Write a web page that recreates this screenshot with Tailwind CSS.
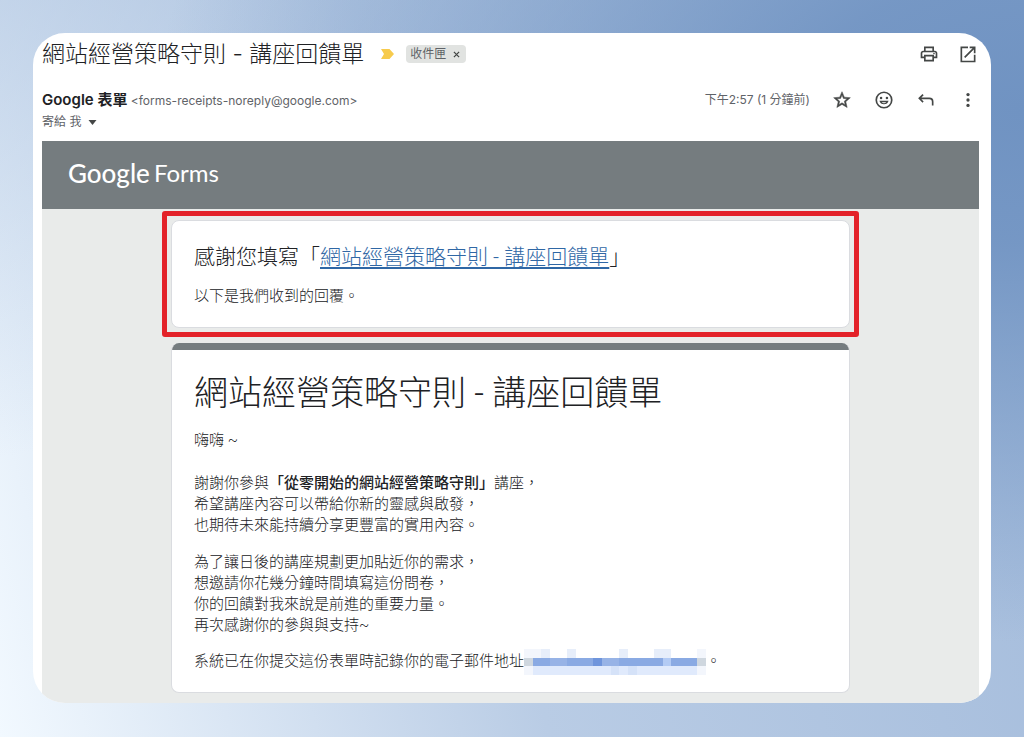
<!DOCTYPE html>
<html lang="zh-Hant">
<head>
  <meta charset="UTF-8">
  <meta name="viewport" content="width=device-width, initial-scale=1.0">
  <title>網站經營策略守則 - 講座回饋單</title>
  <script src="https://cdn.jsdelivr.net/npm/@tailwindcss/browser@4"></script>
</head>
<body class="min-h-screen p-[33px] bg-[radial-gradient(ellipse_at_100%_15%,#7093c2_0%,#7093c2e6_15%,#7093c200_60%),linear-gradient(170deg,#a9c0de80_0%,#a9c0de00_50%),linear-gradient(75deg,#f2f9ff_0%,#b9cce5_45%,#a3bbdb_100%)] font-['Inter','Noto_Sans_CJK_TC',sans-serif] text-[#202124]">

<!-- Mail window -->
<main class="bg-white rounded-[32px] overflow-hidden pl-[9px] pr-3">

  <!-- Subject -->
  <header class="flex items-center h-[42px] pr-px">
    <h1 class="text-[23px] font-light leading-8">網站經營策略守則 - 講座回饋單</h1>
    <svg class="w-[14px] h-3 ml-4" viewBox="0 0 14 12" fill="#f7cb4d"><path d="M1 1h8.500L14 6 9.500 11H1l3-5z"/></svg>
    <span class="ml-3 h-[18px] px-1 flex items-center gap-1 rounded bg-[#e1e3e1] text-xs text-[#5f6368]">收件匣
      <button aria-label="移除標籤" class="w-3 h-4 flex items-center justify-center">
        <svg class="w-[7px] h-[7px]" viewBox="0 0 8 8" stroke="#444746" stroke-width="1.400"><path d="M1 1l6 6M7 1L1 7"/></svg>
      </button>
    </span>
    <div class="ml-auto flex gap-[19px] text-[#444746]">
      <button aria-label="列印"><svg class="w-5 h-5" viewBox="0 0 24 24" fill="currentColor"><path d="M19 8h-1V3H6v5H5c-1.660 0-3 1.340-3 3v6h4v4h12v-4h4v-6c0-1.660-1.340-3-3-3zM8 5h8v3H8V5zm8 14H8v-4h8v4zm2-4v-2H6v2H4v-4c0-.55.45-1 1-1h14c.55 0 1 .45 1 1v4h-2z"/><circle cx="18" cy="11.500" r="1"/></svg></button>
      <button aria-label="在新視窗中開啟"><svg class="w-5 h-5" viewBox="0 0 24 24" fill="none" stroke="currentColor" stroke-width="2"><path d="M12 4H4v17h16v-8M14 4h6v7M20 4L8 16"/></svg></button>
    </div>
  </header>

  <!-- Sender -->
  <section class="mt-[15px] pb-[9px]">
    <div class="flex items-center h-5 pr-px">
      <p class="text-xs text-[#5f6368]"><span class="text-[15px] leading-5 font-semibold text-[#202124]">Google 表單</span> &lt;forms-receipts-noreply@google.com&gt;</p>
      <p class="ml-auto text-xs text-[#5f6368]">下午2:57 (1 分鐘前)</p>
      <div class="ml-[22px] flex gap-[22px] text-[#444746]">
        <button aria-label="加上星號"><svg class="w-5 h-5" viewBox="0 0 24 24" fill="currentColor" stroke="currentColor" stroke-width=".6"><path d="M22 9.240l-7.190-.62L12 2 9.190 8.630 2 9.240l5.460 4.730L5.820 21 12 17.270 18.180 21l-1.630-7.030L22 9.240zM12 15.400l-3.760 2.270 1-4.280-3.320-2.880 4.380-.38L12 6.100l1.710 4.040 4.380.38-3.320 2.880 1 4.280L12 15.400z"/></svg></button>
        <button aria-label="新增表情符號"><svg class="w-5 h-5" viewBox="0 0 24 24" fill="currentColor"><circle cx="12" cy="12" r="9.300" fill="none" stroke="currentColor" stroke-width="2"/><circle cx="8.500" cy="9.500" r="1.500"/><circle cx="15.500" cy="9.500" r="1.500"/><path d="M6.500 13h11a5.700 5.700 0 0 1-11 0zm2.700 1.700a3.700 3.700 0 0 0 5.600 0z" fill-rule="evenodd"/></svg></button>
        <button aria-label="回覆"><svg class="w-5 h-5" viewBox="0 0 24 24" fill="none" stroke="currentColor" stroke-width="2"><path d="M8.500 5.500L4 10l4.500 4.500M4 10h12c2.500 0 4 1.500 4 4v4.500"/></svg></button>
        <button aria-label="更多"><svg class="w-5 h-5" viewBox="0 0 24 24" fill="currentColor"><circle cx="12" cy="5.500" r="2"/><circle cx="12" cy="12" r="2"/><circle cx="12" cy="18.500" r="2"/></svg></button>
      </div>
    </div>
    <button class="mt-[2px] flex items-center gap-[7px] h-5 text-xs text-[#5f6368]">寄給 我
      <svg class="w-[9px] h-[5px]" viewBox="0 0 8 5" fill="#444746"><path d="M0 0h8L4 5z"/></svg>
    </button>
  </section>

  <!-- Mail body -->
  <article class="bg-[#e9ebea] pb-[10px]">
    <div class="h-[68px] px-[26px] pb-1 flex items-center gap-1 bg-[#757c7f] text-white font-['Lato',sans-serif]">
      <span class="text-[26px] leading-8 font-medium">Google</span>
      <span class="text-2xl leading-8">Forms</span>
    </div>

    <div class="max-w-[697px] mx-auto pt-[2px]">
      <!-- Highlighted card -->
      <div class="border-[5px] border-[#e32229] rounded-[3px] px-1 py-1">
        <section class="bg-white border border-[#dadce0] rounded-lg px-[22px] pt-[22px] pb-[21px]">
          <h2 class="font-['Roboto','Noto_Sans_CJK_TC',sans-serif] text-[21px] leading-7 font-light">感謝您填寫「<a href="#" class="text-[#2f67a5] underline underline-offset-3 decoration-2">網站經營策略守則 - 講座回饋單</a>」</h2>
          <p class="mt-[14px] text-[15px] leading-[21px] font-light">以下是我們收到的回覆。</p>
        </section>
      </div>

      <!-- Form card -->
      <section class="mt-[6px] mx-[9px] bg-white rounded-lg overflow-hidden border border-t-0 border-[#dadce0] font-['Roboto','Noto_Sans_CJK_TC',sans-serif] text-[15px] leading-[21px] font-light">
        <div class="h-[7px] bg-[#757c7f]"></div>
        <div class="px-[22px] pt-[21px] pb-5">
          <h2 class="text-[34px] leading-[44px]">網站經營策略守則 - 講座回饋單</h2>
          <p class="mt-[15px]">嗨嗨 ~</p>
          <p class="mt-[22px]">謝謝你參與<b class="font-medium">「從零開始的網站經營策略守則」</b>講座，<br>希望講座內容可以帶給你新的靈感與啟發，<br>也期待未來能持續分享更豐富的實用內容。</p>
          <p class="mt-4">為了讓日後的講座規劃更加貼近你的需求，<br>想邀請你花幾分鐘時間填寫這份問卷，<br>你的回饋對我來說是前進的重要力量。<br>再次感謝你的參與與支持~</p>
          <p class="mt-[15px] h-[21px] flex items-center">系統已在你提交這份表單時記錄你的電子郵件地址
            <!-- Redacted address -->
            <svg class="w-[182px] h-[26px] shrink-0" viewBox="0 0 21 3" preserveAspectRatio="none" shape-rendering="crispEdges">
              <path fill="#f3f6fc" d="M0 0h2v1H0zM20 0h1v1h-1zM0 2h1v1H0zM20 2h1v1h-1z"/>
              <path fill="#e7eefa" d="M2 0h1v1H2zM5 0h1v1H5zM11 0h1v1h-1zM15 0h2v1h-2z"/>
              <path fill="#cfd7df" d="M0 1h1v1H0zM20 1h1v1h-1z"/>
              <path fill="#8aaae3" d="M1 1h19v1H1z"/>
              <path fill="#97b3e6" d="M3 1h2v1H3zM9 1h2v1H9z"/>
              <path fill="#6f95dc" d="M8 1h1v1H8z"/>
              <path fill="#b3cbf4" d="M16 1h1v1h-1z"/>
              <path fill="#e0eafc" d="M1 2h19v1H1z"/>
              <path fill="#d5e2f8" d="M10 2h1v1h-1zM12 2h1v1h-1z"/>
            </svg>。</p>
        </div>
      </section>
    </div>
  </article>
</main>

</body>
</html>
